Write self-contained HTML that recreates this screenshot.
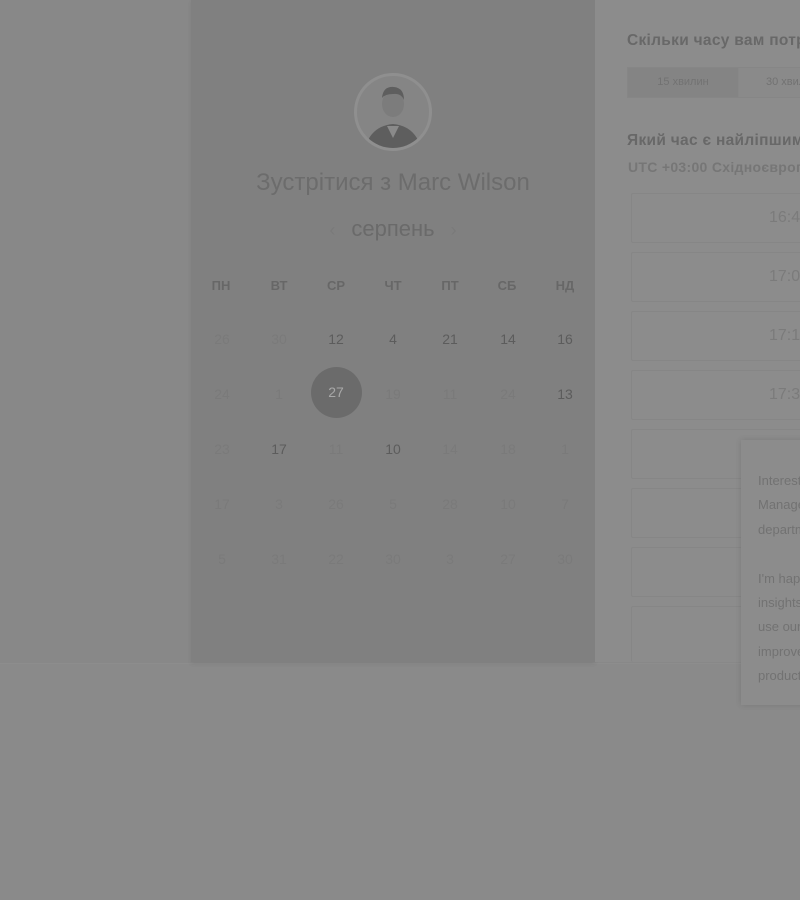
<!DOCTYPE html>
<html><head><meta charset="utf-8"><style>
*{margin:0;padding:0;box-sizing:border-box}
html,body{width:800px;height:900px;overflow:hidden}
body{background:#8a8a8a;font-family:"Liberation Sans","DejaVu Sans",sans-serif}
#w{position:relative;width:800px;height:900px;overflow:hidden}
.top{position:absolute;left:0;top:0;width:800px;height:664px;background:#888;border-bottom:1px solid #8d8d8d}
.left{position:absolute;left:191px;top:0;width:404px;height:662px;background:#808080;box-shadow:0 2px 4px rgba(0,0,0,.08)}
.right{position:absolute;left:595px;top:0;width:205px;height:662px;background:#8c8c8c}
.av{position:absolute;left:354px;top:73px;width:78px;height:78px;border-radius:50%;border:3px solid #8f8f8f;background:#858585;overflow:hidden}
.title{position:absolute;left:191px;width:404px;top:169px;text-align:center;font-size:24px;color:#6c6c6c}
.month{position:absolute;left:191px;width:404px;top:216px;text-align:center;font-size:22px;color:#6a6a6a}
.month span{color:#7a7a7a;font-size:18px;margin:0 16px}
.dn,.num{position:absolute;width:40px;text-align:center;margin-left:-20px}
.dn{font-size:13px;font-weight:bold;color:#676767;top:278px}
.num{font-size:14px}
.d{color:#5c5c5c}.f{color:#7a7a7a}
.sel{position:absolute;left:311px;top:367px;width:51px;height:51px;border-radius:50%;background:#6b6b6b}
.h{position:absolute;left:627px;font-weight:bold;font-size:15.5px;color:#686868;white-space:nowrap;letter-spacing:.3px}
.tabs{position:absolute;left:627px;top:67px;width:180px;height:31px;border:1px solid #868686;background:#8a8a8a;overflow:hidden}
.tab1{position:absolute;left:0;top:0;width:111px;height:29px;background:#848484;border-right:1px solid #888;font-size:11px;color:#727272;text-align:center;line-height:29px}
.tab2{position:absolute;left:138px;top:8px;font-size:11px;color:#727272;white-space:nowrap}
.tz{position:absolute;left:628px;top:159px;font-size:14px;font-weight:bold;color:#767676;white-space:nowrap;letter-spacing:.3px}
.slot{position:absolute;left:631px;width:180px;height:50px;border:1px solid #868686;border-radius:2px;background:#8c8c8c;font-size:16px;color:#7b7b7b;padding-left:137px;line-height:48px;white-space:nowrap;overflow:hidden}
.pop{position:absolute;left:741px;top:440px;width:70px;height:265px;background:#8c8c8c;box-shadow:0 0 6px rgba(0,0,0,.12);font-size:13px;color:#727272;line-height:24.4px;padding:29px 0 0 17px;white-space:nowrap;overflow:hidden}
</style></head><body><div id="w">
<div class="top"></div>
<div class="left"></div>
<div class="right"></div>
<div class="av"><svg width="72" height="72" viewBox="0 0 72 72"><ellipse cx="36" cy="28" rx="11" ry="13" fill="#7c7c7c"/><path d="M25 22 Q26 10 37 11 Q47 12 47 24 Q44 17 36 18 Q28 18 25 22Z" fill="#5e5e5e"/><path d="M8 72 Q14 50 36 48 Q58 50 64 72Z" fill="#5e5e5e"/><path d="M30 50 L36 62 L42 50Z" fill="#8a8a8a"/></svg></div>
<div class="title">Зустрітися з Marc Wilson</div>
<div class="month"><span>‹</span>серпень<span>›</span></div>
<div class="dn" style="left:221px">ПН</div><div class="dn" style="left:279px">ВТ</div><div class="dn" style="left:336px">СР</div><div class="dn" style="left:393px">ЧТ</div><div class="dn" style="left:450px">ПТ</div><div class="dn" style="left:507px">СБ</div><div class="dn" style="left:565px">НД</div>
<div class="sel"></div>
<div class="num f" style="left:222px;top:331px">26</div><div class="num f" style="left:279px;top:331px">30</div><div class="num d" style="left:336px;top:331px">12</div><div class="num d" style="left:393px;top:331px">4</div><div class="num d" style="left:450px;top:331px">21</div><div class="num d" style="left:508px;top:331px">14</div><div class="num d" style="left:565px;top:331px">16</div>
<div class="num f" style="left:222px;top:386px">24</div><div class="num f" style="left:279px;top:386px">1</div><div class="num" style="left:336px;top:384px;color:#a8a8a8">27</div><div class="num f" style="left:393px;top:386px">19</div><div class="num f" style="left:450px;top:386px">11</div><div class="num f" style="left:508px;top:386px">24</div><div class="num d" style="left:565px;top:386px">13</div>
<div class="num f" style="left:222px;top:441px">23</div><div class="num d" style="left:279px;top:441px">17</div><div class="num f" style="left:336px;top:441px">11</div><div class="num d" style="left:393px;top:441px">10</div><div class="num f" style="left:450px;top:441px">14</div><div class="num f" style="left:508px;top:441px">18</div><div class="num f" style="left:565px;top:441px">1</div>
<div class="num f" style="left:222px;top:496px">17</div><div class="num f" style="left:279px;top:496px">3</div><div class="num f" style="left:336px;top:496px">26</div><div class="num f" style="left:393px;top:496px">5</div><div class="num f" style="left:450px;top:496px">28</div><div class="num f" style="left:508px;top:496px">10</div><div class="num f" style="left:565px;top:496px">7</div>
<div class="num f" style="left:222px;top:551px">5</div><div class="num f" style="left:279px;top:551px">31</div><div class="num f" style="left:336px;top:551px">22</div><div class="num f" style="left:393px;top:551px">30</div><div class="num f" style="left:450px;top:551px">3</div><div class="num f" style="left:508px;top:551px">27</div><div class="num f" style="left:565px;top:551px">30</div>
<div class="h" style="top:32px">Скільки часу вам потрібно?</div>
<div class="tabs"><div class="tab1">15 хвилин</div><div class="tab2">30 хвилин</div></div>
<div class="h" style="top:132px">Який час є найліпшим?</div>
<div class="tz">UTC +03:00 Східноєвропейський час</div>
<div class="slot" style="top:193px">16:45</div>
<div class="slot" style="top:252px">17:00</div>
<div class="slot" style="top:311px">17:15</div>
<div class="slot" style="top:370px">17:30</div>
<div class="slot" style="top:429px"></div>
<div class="slot" style="top:488px"></div>
<div class="slot" style="top:547px"></div>
<div class="slot" style="top:606px;height:56px;border-bottom:none"></div>
<div class="pop">Interested<br>Management<br>department<br><br>I'm happy<br>insights<br>use our<br>improve<br>product</div>
</div></body></html>
